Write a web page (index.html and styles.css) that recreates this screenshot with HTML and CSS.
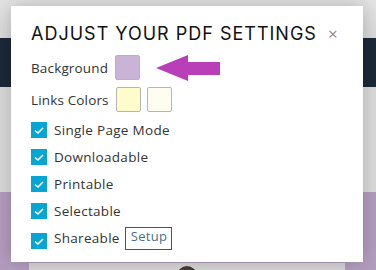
FILE: index.html
```html
<!DOCTYPE html>
<html lang="en">
<head>
    <meta charset="UTF-8">
    <meta name="viewport" content="width=device-width, initial-scale=1.0">
    <title>PDF Settings</title>
    <link rel="stylesheet" href="styles.css">
</head>
<body>
    <div class="page">
        <div class="topbar"></div>
        <div class="nav"></div>
        <div class="content"></div>
        <div class="hero">
            <div class="card">
                <div class="avatar"></div>
            </div>
        </div>
    </div>

    <div class="modal">
        <div class="modal-head">
            <h2>ADJUST YOUR PDF SETTINGS</h2>
            <span class="close">&times;</span>
        </div>

        <div class="row">
            <span class="label">Background</span>
            <span class="swatch bg"></span>
            <svg class="arrow" width="66" height="26" viewBox="0 0 66 26">
                <polygon points="0,13 32,0 32,7 64,7 64,20 32,20 32,26" fill="#b83fb8"/>
            </svg>
        </div>

        <div class="row links">
            <span class="label">Links Colors</span>
            <span class="swatch link1"></span>
            <span class="swatch link2"></span>
        </div>

        <label class="check"><span class="box"></span>Single Page Mode</label>
        <label class="check"><span class="box"></span>Downloadable</label>
        <label class="check"><span class="box"></span>Printable</label>
        <label class="check"><span class="box"></span>Selectable</label>
        <label class="check share"><span class="box"></span>Shareable <button class="setup">Setup</button></label>
    </div>
</body>
</html>
```

FILE: styles.css
```css
body {
    margin: 0;
    font-family: "Open Sans", sans-serif;
    color: #333;
}
.page {
    width: 376px;
    height: 270px;
    overflow: hidden;
}
.topbar {
    height: 38px;
    background: linear-gradient(#e4e4e4, #dadada);
}
.nav {
    height: 49px;
    background: #1d2938;
}
.content {
    height: 105px;
    background: linear-gradient(90deg, #d9d9d9, #e6e6e6 10%, #e6e6e6 90%, #d9d9d9);
}
.hero {
    height: 78px;
    background: #b39dbf;
    overflow: hidden;
}
.card {
    margin: 71px 0 0 29px;
    width: 316px;
    height: 20px;
    background: #d8d8d8;
    display: flex;
    justify-content: center;
}
.avatar {
    width: 20px;
    height: 20px;
    margin-top: 3px;
    border-radius: 50%;
    background: #4a3a36;
}
.modal {
    position: absolute;
    left: 11px;
    top: 6px;
    width: 352px;
    height: 256px;
    box-sizing: border-box;
    padding: 16px 20px 0;
    background: #fff;
    box-shadow: 0 0 18px rgba(0, 0, 0, 0.22);
}
.modal-head {
    display: flex;
    align-items: baseline;
    margin-bottom: 10px;
}
.modal-head h2 {
    margin: 0;
    font-family: "Inter", sans-serif;
    font-weight: 400;
    font-size: 18px;
    letter-spacing: 1px;
    color: #111;
}
.close {
    margin-left: 11px;
    font-size: 17px;
    color: #888;
}
.row {
    display: flex;
    align-items: center;
    height: 25px;
    font-size: 13.5px;
    letter-spacing: 0.15px;
}
.row.links {
    margin-top: 7px;
    margin-bottom: 10px;
}
.label {
    margin-right: 7px;
}
.swatch {
    width: 23px;
    height: 23px;
    border: 1px solid #b5b5b5;
    border-radius: 2px;
    margin-right: 6px;
}
.bg {
    background: #c9b3d6;
}
.link1 {
    background: #fffccb;
}
.link2 {
    background: #fffdef;
}
.arrow {
    margin-left: 10px;
}
.check {
    display: flex;
    align-items: center;
    height: 16px;
    margin-bottom: 11px;
    font-size: 13.5px;
    letter-spacing: 0.3px;
}
.box {
    width: 16px;
    height: 16px;
    margin-right: 7px;
    background: #06a6d4 url("data:image/svg+xml,%3Csvg xmlns='http://www.w3.org/2000/svg' width='16' height='16'%3E%3Cpath d='M4 8.5l3 2.5 5-5' fill='none' stroke='white' stroke-width='1.6'/%3E%3C/svg%3E");
}
.check.share {
    height: 22px;
    margin-top: -3px;
}
.check.share .box {
    margin-top: 6px;
}
.setup {
    margin-left: 5px;
    width: 47px;
    height: 23px;
    padding: 0 0 6px 5px;
    text-align: left;
    align-self: flex-start;
    border: 1px solid #1a6584;
    background: #fff;
    color: #4a6f8c;
    font-family: "Open Sans", sans-serif;
    font-size: 13px;
    letter-spacing: 0.3px;
    line-height: 14px;
}
```
